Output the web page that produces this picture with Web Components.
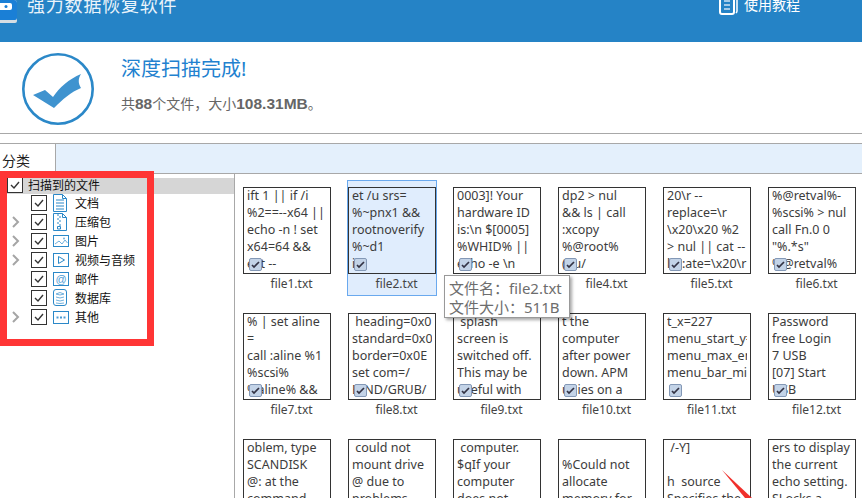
<!DOCTYPE html>
<html>
<head>
<meta charset="utf-8">
<style>
  html, body { margin: 0; height: 100%; overflow: hidden; background: #fff; }
  body { font-family: "Noto Sans", "Noto Sans CJK SC", sans-serif; }
</style>
</head>
<body>
<recovery-app>
  <app-header title-text="强力数据恢复软件" link-text="使用教程"></app-header>
  <scan-summary></scan-summary>
  <tab-strip label="分类"></tab-strip>
  <div slot="tree">
    <tree-row root checked label="扫描到的文件"></tree-row>
    <tree-row checked label="文档" icon="doc"></tree-row>
    <tree-row checked arrow label="压缩包" icon="zip"></tree-row>
    <tree-row checked arrow label="图片" icon="pic"></tree-row>
    <tree-row checked arrow label="视频与音频" icon="video"></tree-row>
    <tree-row checked label="邮件" icon="mail"></tree-row>
    <tree-row checked label="数据库" icon="db"></tree-row>
    <tree-row checked arrow label="其他" icon="more"></tree-row>
  </div>
  <file-grid slot="files">
<file-card name="file1.txt">ift 1 || if /i
%2==--x64 ||
echo -n ! set
x64=64 &amp;&amp;
ext --</file-card>
<file-card name="file2.txt" selected>et /u srs=
%~pnx1 &amp;&amp;
rootnoverify
%~d1
i</file-card>
<file-card name="file3.txt">0003]! Your
hardware ID
is:\n $[0005]
%WHID% ||
echo -e \n</file-card>
<file-card name="file4.txt">dp2 &gt; nul
&amp;&amp; ls | call
:xcopy
%@root%
(nu/</file-card>
<file-card name="file5.txt">20\r --
replace=\r
\x20\x20 %2
&gt; nul || cat --
lm:ate=\x20\r</file-card>
<file-card name="file6.txt">%@retval%-
%scsi% &gt; nul
call Fn.0 0
"%.*s"
%@retval%</file-card>
<file-card name="file7.txt">% | set aline
=
call :aline %1
%scsi%
%aline% &amp;&amp;</file-card>
<file-card name="file8.txt"> heading=0x0E
standard=0x0E
border=0x0E
set com=/
BIND/GRUB/</file-card>
<file-card name="file9.txt"> splash
screen is
switched off.
This may be
useful with</file-card>
<file-card name="file10.txt">t the
computer
after power
down. APM
unies on a</file-card>
<file-card name="file11.txt">t_x=227
menu_start_y=
menu_max_entr
menu_bar_min</file-card>
<file-card name="file12.txt">Password
free Login
7 USB
[07] Start
USB</file-card>
<file-card name="file13.txt">oblem, type
SCANDISK
@: at the
command</file-card>
<file-card name="file14.txt"> could not
mount drive
@ due to
problems</file-card>
<file-card name="file15.txt"> computer.
$qIf your
computer
does not</file-card>
<file-card name="file16.txt">
%Could not
allocate
memory for</file-card>
<file-card name="file17.txt"> /-Y]

h  source
Specifies the</file-card>
<file-card name="file18.txt">ers to display
the current
echo setting.
SLocks a</file-card>
  </file-grid>
</recovery-app>

<script>
class AppHeader extends HTMLElement {
    constructor() {
        super();
        this.attachShadow({ mode: 'open' });
        this.shadowRoot.innerHTML = `
            <style>
                :host { display: flex; height: 42px; background: #2583c6; color: #fff; justify-content: space-between; overflow: hidden; flex: none; }
                .left { display: flex; align-items: flex-start; gap: 10px; margin-top: -7px; }
                .left span { font-size: 18px; line-height: 24px; letter-spacing: 0.8px; color: #eaf3fa; }
                .right { display: flex; align-items: flex-start; gap: 6px; margin: -4px 62px 0 0; }
                .right span { font-size: 14px; line-height: 18px; }
                svg { display: block; flex: none; }
            </style>
            <div class="left">
                <svg width="17" height="30" viewBox="0 0 17 30">
                    <path d="M0 7h14a3 3 0 0 1 3 3v18a2 2 0 0 1-2 2H0z" fill="#d5dde3"/>
                    <path d="M0 7h14a3 3 0 0 1 3 3v15a2 2 0 0 1-2 2H0z" fill="#1a7fd6"/>
                    <path d="M0 10h10a2 2 0 0 1 2 2v3a2 2 0 0 1-2 2H0z" fill="#fff"/>
                    <circle cx="6" cy="13.500" r="1.500" fill="#1a7fd6"/>
                </svg>
                <span>${this.getAttribute('title-text')}</span>
            </div>
            <div class="right">
                <svg width="19" height="20" viewBox="0 0 19 20" fill="none" stroke="#fff">
                    <path d="M1 0v16a2 2 0 0 0 2 2h10a2 2 0 0 0 2-2V0" stroke-width="2"/>
                    <path d="M18 2v13a3 3 0 0 1-1 2" stroke-width="1.500"/>
                    <path d="M5 5h6M5 9h6M5 13h6" stroke="#cfe3f3" stroke-width="1.500"/>
                </svg>
                <span>${this.getAttribute('link-text')}</span>
            </div>
        `;
    }
}
customElements.define('app-header', AppHeader);

class ScanSummary extends HTMLElement {
    constructor() {
        super();
        this.attachShadow({ mode: 'open' });
        this.shadowRoot.innerHTML = `
            <style>
                :host { display: flex; height: 92px; box-sizing: border-box; border-bottom: 1px solid #a8a8a8; align-items: center; padding: 3px 0 0 22px; gap: 27px; flex: none; }
                .msg { margin-bottom: 11px; }
                h1 { margin: 0 0 12px; font-size: 20px; line-height: 28px; font-weight: normal; color: #2281cf; }
                p { margin: 0; font-size: 14px; line-height: 18px; color: #666; }
                b { font-family: "Liberation Sans", sans-serif; font-size: 15.5px; }
            </style>
            <svg width="72" height="72" viewBox="0 0 72 72">
                <circle cx="36" cy="36" r="34.700" fill="none" stroke="#2b88c8" stroke-width="2.600"/>
                <path d="M11 42 L23 37 L31 44 C37 35 47 26 59 21 C56 26 56 30 59 35 C49 39 41 46 32 55 Z" fill="#3f93cf"/>
            </svg>
            <div class="msg">
                <h1>深度扫描完成!</h1>
                <p>共<b>88</b>个文件，大小<b>108.31MB</b>。</p>
            </div>
        `;
    }
}
customElements.define('scan-summary', ScanSummary);

class TabStrip extends HTMLElement {
    constructor() {
        super();
        this.attachShadow({ mode: 'open' });
        this.shadowRoot.innerHTML = `
            <style>
                :host { display: flex; height: 31px; box-sizing: border-box; margin-top: 9px; border-top: 1px solid #a8a8a8; border-bottom: 1px solid #a8a8a8; background: #e4f0fc; flex: none; }
                div { width: 56px; box-sizing: border-box; background: #fff; border-right: 1px solid #a8a8a8; padding: 7px 0 0 2px; font-size: 14px; line-height: 20px; color: #222; }
            </style>
            <div>${this.getAttribute('label')}</div>
        `;
    }
}
customElements.define('tab-strip', TabStrip);

// outline icons for the tree, all on a 16x18 box
const ICONS = {
    doc: '<path d="M.5 .5h9l4 4v13H.5z"/><path d="M9.500 .5v4h4"/><path d="M3 6h8M3 9h8M3 12h8M3 15h8"/>',
    zip: '<path d="M.5 .5h9l4 4v13H.5z"/><path d="M9.500 .5v4h4"/><path d="M4 2h2M6 4h2M4 6h2M6 8h2M4 10h2M6 12h2M4.500 13.500h3v2.500h-3z"/>',
    pic: '<rect x=".5" y="3.500" width="15" height="11"/><path d="M2 12l4-3 3 3 3-4 2.500 3" stroke="#6fb0dd"/><circle cx="11" cy="6.500" r="1" fill="#6fb0dd" stroke="none"/>',
    video: '<rect x=".5" y="2.500" width="15" height="13"/><path d="M5.500 5.500l6 3.500-6 3.500z"/>',
    mail: '<rect x=".5" y="2.500" width="15" height="13"/><text x="8" y="12.500" text-anchor="middle" font-size="11" fill="#4a9ad4" stroke="none" font-family="Liberation Sans, sans-serif">@</text>',
    db: '<rect x=".5" y=".5" width="13" height="16" rx="2.500"/><path d="M3 5q4 2 8 0M3 8q4 2 8 0M3 11q4 2 8 0M3 14q4 1 8 0M3 5q4-3 8 0" stroke="#6fb0dd"/>',
    more: '<rect x=".5" y="3.500" width="15" height="12"/><path d="M3.500 9.500h2M7 9.500h2M10.500 9.500h2" stroke="#4a9ad4" stroke-width="2"/>'
};

class TreeRow extends HTMLElement {
    constructor() {
        super();
        this.attachShadow({ mode: 'open' });
        const root = this.hasAttribute('root');
        const icon = this.getAttribute('icon');
        this.shadowRoot.innerHTML = `
            <style>
                :host { display: flex; align-items: center; height: 19px; font-size: 12px; color: #111; }
                :host([root]) { height: 16px; box-sizing: border-box; padding: 0 0 3px 7px; margin-bottom: -1px; background: #d6d6d6; }
                .arrow { width: 31px; padding-left: 12px; box-sizing: border-box; flex: none; }
                .box { width: 14px; height: 14px; border: 1px solid #333; background: #fff; flex: none; display: block; }
                :host([root]) .box { margin-right: 5px; }
                .ico { margin: 0 6px 0 6px; flex: none; display: block; }
                svg { display: block; }
            </style>
            ${root ? '' : `<span class="arrow">${this.hasAttribute('arrow') ? '<svg width="8" height="12" viewBox="0 0 8 12"><path d="M1 1l5 5-5 5" fill="none" stroke="#a5a5a5" stroke-width="2"/></svg>' : ''}</span>`}
            <svg class="box" viewBox="0 0 14 14"><path d="M3 7l3 3 5-6" fill="none" stroke="#333" stroke-width="1.400"/></svg>
            ${icon ? `<svg class="ico" width="16" height="18" viewBox="0 0 16 18" fill="none" stroke="#2b88c8">${ICONS[icon]}</svg>` : ''}
            <span>${this.getAttribute('label')}</span>
        `;
    }
}
customElements.define('tree-row', TreeRow);

class FileCard extends HTMLElement {
    constructor() {
        super();
        this.attachShadow({ mode: 'open' });
        this.shadowRoot.innerHTML = `
            <style>
                :host { display: block; width: 90px; height: 116px; box-sizing: border-box; padding-top: 6px; border: 1px solid transparent; position: relative; color: #3c3c3c; }
                :host([selected]) { background: #e0edfd; border-color: #6aa9ee; }
                .thumb { height: 87px; box-sizing: border-box; border: 1px solid #333; padding: 0 3px; overflow: hidden; background: #fff; position: relative; }
                :host([selected]) .thumb { background: #e0edfd; }
                .txt { white-space: pre; font-size: 12.5px; line-height: 17px; overflow: hidden; height: 85px; margin-top: -1px; }
                .check { position: absolute; left: 5px; top: 70px; width: 13px; height: 13px; box-sizing: border-box; border: 1px solid #8398b6; border-radius: 2px; background: #c3d3e7; }
                .check svg { display: block; }
                .name { text-align: center; font-size: 12px; line-height: 16px; margin-top: 2px; padding-left: 9px; color: #444; }
            </style>
            <div class="thumb">
                <div class="txt"><slot></slot></div>
                <span class="check"><svg width="11" height="11" viewBox="0 0 11 11"><path d="M2 6l2 2 5-5" fill="none" stroke="#334" stroke-width="1.700"/></svg></span>
            </div>
            <div class="name">${this.getAttribute('name')}</div>
        `;
    }
}
customElements.define('file-card', FileCard);

class FileGrid extends HTMLElement {
    constructor() {
        super();
        this.attachShadow({ mode: 'open' });
        this.shadowRoot.innerHTML = `
            <style>
                :host { display: grid; grid-template-columns: repeat(6, 90px); column-gap: 15px; row-gap: 10px; padding: 6px 0 0 7px; align-content: start; }
            </style>
            <slot></slot>
        `;
    }
}
customElements.define('file-grid', FileGrid);

class RecoveryApp extends HTMLElement {
    constructor() {
        super();
        this.attachShadow({ mode: 'open' });
        this.shadowRoot.innerHTML = `
            <style>
                :host { display: flex; flex-direction: column; height: 498px; overflow: hidden; position: relative; }
                .body { display: flex; flex: 1; min-height: 0; }
                .left { width: 235px; box-sizing: border-box; border-right: 1px solid #a8a8a8; padding-top: 4px; flex: none; }
                .right { flex: 1; min-width: 0; overflow: hidden; }
                .mark { position: absolute; left: 0; top: 171px; width: 154px; height: 175px; box-sizing: border-box; border: 7px solid #ff3535; pointer-events: none; }
                .tip { position: absolute; left: 444px; top: 275px; width: 126px; height: 43px; box-sizing: border-box; border: 1px solid #999; background: #fff; box-shadow: 2px 2px 3px rgba(0,0,0,.35); padding: 3px 0 0 4px; font-size: 15px; line-height: 19px; color: #6d6d6d; white-space: nowrap; }
                .arrow { position: absolute; left: 715px; top: 465px; }
            </style>
            <slot></slot>
            <div class="body">
                <div class="left"><slot name="tree"></slot></div>
                <div class="right"><slot name="files"></slot></div>
            </div>
            <div class="mark"></div>
            <div class="tip">文件名：file2.txt<br>文件大小：511B</div>
            <svg class="arrow" width="50" height="33" viewBox="0 0 50 33"><path d="M7 5L37 33H30z" fill="#f0302c"/></svg>
        `;
    }
}
customElements.define('recovery-app', RecoveryApp);
</script>
</body>
</html>
